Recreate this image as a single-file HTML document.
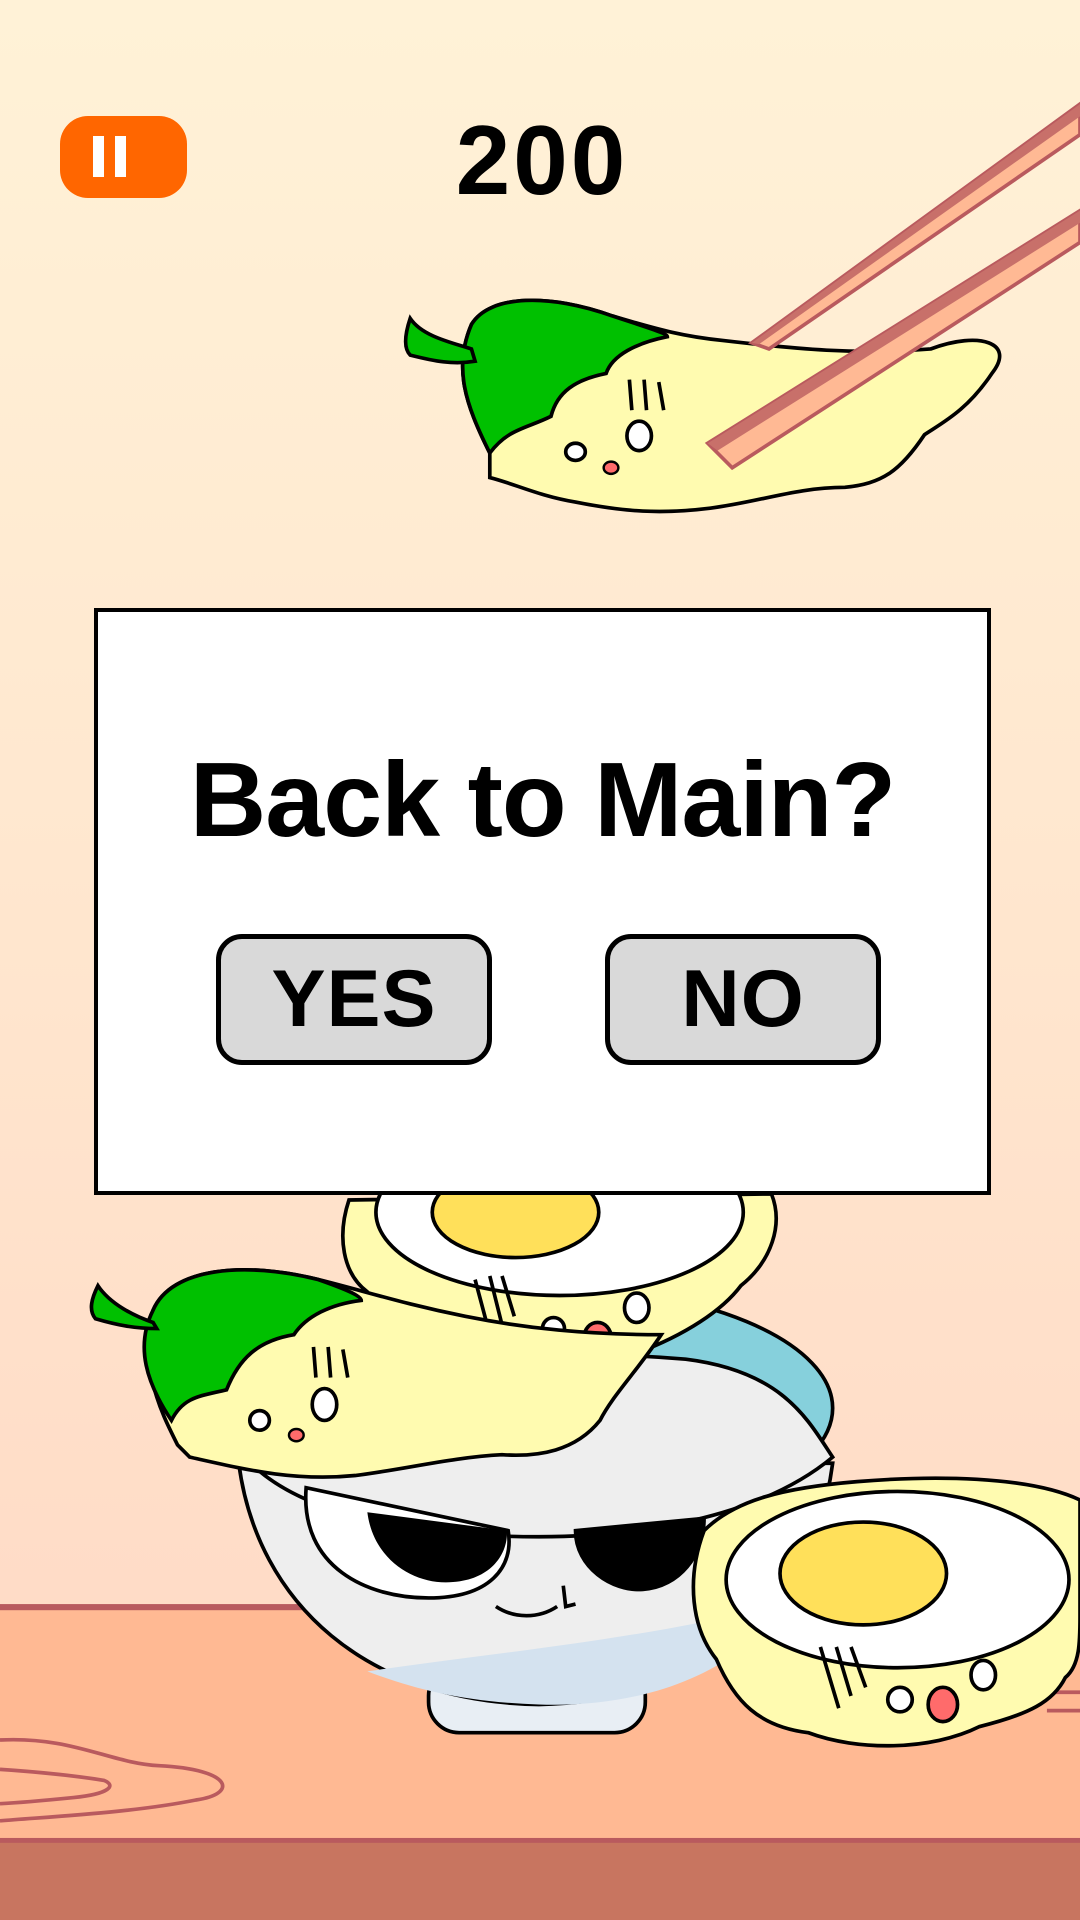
<!DOCTYPE html>
<html><head><meta charset="utf-8"><style>
html,body{margin:0;padding:0}
body{width:1080px;height:1920px;position:relative;overflow:hidden;background:linear-gradient(#fff2d7 0%,#ffe7cf 45%,#ffdcc7 83%);font-family:"Liberation Sans",sans-serif}
svg.bg{position:absolute;left:0;top:0;width:1080px;height:1920px}
.pause{position:absolute;left:60px;top:116px;width:127px;height:82px;background:#ff6600;border-radius:28px}
.pause i{position:absolute;top:20px;width:11px;height:41px;background:#fff}
.score{position:absolute;left:342px;width:400px;top:110px;text-align:center;font-weight:bold;font-size:98px;line-height:100px;letter-spacing:3px}
.dlg{position:absolute;left:94px;top:608px;width:889px;height:579px;background:#fff;border:4px solid #000}
.title{position:absolute;left:0;right:0;top:128px;text-align:center;font-weight:bold;font-size:106px;line-height:120px;letter-spacing:-1px}
.btn{position:absolute;top:322px;width:266px;height:121px;background:#d9d9d9;border:5px solid #000;border-radius:26px;text-align:center;font-weight:bold;font-size:81px;line-height:121px;letter-spacing:1px}
</style></head><body>
<svg class="bg" viewBox="0 0 882 1568" preserveAspectRatio="none">
<rect x="0" y="1312" width="882" height="256" fill="#ffb993"/>
<rect x="0" y="1310" width="882" height="5" fill="#b95a5e"/>
<rect x="0" y="1503" width="882" height="65" fill="#c87560"/>
<rect x="0" y="1501" width="882" height="4" fill="#b95a5e"/>
<path d="M0 1421 C60 1418 90 1440 130 1442 C190 1445 195 1465 160 1470 C110 1480 50 1483 0 1487 M0 1445 C30 1447 60 1450 85 1454 C95 1458 90 1465 60 1468 C40 1470 20 1472 0 1473" fill="none" stroke="#b95a5e" stroke-width="3"/>
<path d="M860 1382 L882 1382 M855 1397 L882 1397" stroke="#b95a5e" stroke-width="3"/>
<!-- top tempura -->
<path d="M400 370 C380 330 370 300 385 265 C400 240 450 240 500 258 C540 270 560 275 590 278 C650 285 700 290 760 285 C800 270 830 280 810 305 C790 335 770 345 755 355 C735 385 720 395 690 398 C650 398 620 410 580 415 C540 420 510 418 470 410 C440 405 420 395 400 390 Z" fill="#fffbb0" stroke="#000" stroke-width="3"/>
<path d="M400 370 C380 330 370 300 385 265 C400 240 450 240 500 258 C530 268 545 272 545 275 C520 280 500 290 495 305 C470 310 455 320 450 340 C430 350 415 350 400 370 Z" fill="#00c000" stroke="#000" stroke-width="3"/>
<path d="M385 285 C370 280 345 275 335 260 C330 275 330 285 335 290 C355 295 370 298 388 295 Z" fill="#00c000" stroke="#000" stroke-width="3"/>
<ellipse cx="470" cy="369" rx="8" ry="7" fill="#fff" stroke="#000" stroke-width="3"/>
<ellipse cx="522" cy="356" rx="10" ry="12" fill="#fff" stroke="#000" stroke-width="3"/>
<ellipse cx="499" cy="382" rx="6" ry="5" fill="#ff6b6b" stroke="#000" stroke-width="2"/>
<path d="M514 310 L516 335 M526 310 L528 335 M538 312 L542 335" stroke="#000" stroke-width="3"/>
<!-- chopsticks -->
<path d="M882 85 L882 110 L628 285 L614 280 Z" fill="#ffb994" stroke="#b95a5e" stroke-width="3"/>
<path d="M882 85 L882 95 L620 281 L614 280 Z" fill="#c8706a"/>
<path d="M882 172 L882 198 L598 382 L578 362 Z" fill="#ffb994" stroke="#b95a5e" stroke-width="3"/>
<path d="M882 172 L882 182 L586 368 L578 362 Z" fill="#c8706a"/>
<!-- bowl -->
<rect x="350" y="1360" width="177" height="55" rx="25" fill="#e8eef4" stroke="#000" stroke-width="3"/>
<path d="M195 1195 C210 1310 300 1390 440 1392 C580 1390 665 1310 680 1195 Z" fill="#eeeeee" stroke="#000" stroke-width="3"/>
<path d="M300 1365 C400 1350 520 1340 640 1310 C600 1370 520 1395 440 1392 C380 1390 340 1380 300 1365 Z" fill="#d4e2ef"/>
<ellipse cx="440" cy="1150" rx="240" ry="100" fill="#86d0dc" stroke="#000" stroke-width="3"/>
<path d="M200 1190 C220 1120 380 1095 560 1110 C640 1120 660 1160 680 1190 C620 1240 520 1255 440 1255 C330 1255 240 1235 200 1190 Z" fill="#eeeeee" stroke="#000" stroke-width="3"/>
<path d="M250 1215 C245 1280 300 1305 350 1305 C400 1305 420 1280 415 1250 Z" fill="#fff" stroke="#000" stroke-width="3"/>
<path d="M300 1235 C305 1275 340 1295 370 1292 C400 1290 415 1270 414 1250 Z" fill="#000"/>
<path d="M470 1250 C470 1280 500 1300 525 1298 C555 1296 575 1270 575 1240 Z" fill="#000" stroke="#000" stroke-width="3"/>
<path d="M405 1312 C420 1322 440 1322 455 1312 M460 1295 L462 1312 L470 1310" fill="none" stroke="#000" stroke-width="3"/>
<!-- stacked egg -->
<path d="M285 980 C275 1010 280 1040 300 1055 C315 1080 330 1095 360 1100 C400 1120 470 1115 520 1105 C560 1090 590 1070 605 1050 C630 1030 640 1000 630 975 Z" fill="#fffbb0" stroke="#000" stroke-width="3"/>
<ellipse cx="457" cy="990" rx="150" ry="68" fill="#fff" stroke="#000" stroke-width="3"/>
<ellipse cx="421" cy="990" rx="68" ry="37" fill="#ffe05a" stroke="#000" stroke-width="3"/>
<ellipse cx="452" cy="1085" rx="9" ry="9" fill="#fff" stroke="#000" stroke-width="3"/>
<ellipse cx="520" cy="1068" rx="10" ry="12" fill="#fff" stroke="#000" stroke-width="3"/>
<ellipse cx="488" cy="1092" rx="11" ry="12" fill="#ff6b6b" stroke="#000" stroke-width="3"/>
<path d="M388 1045 L400 1090 M400 1042 L410 1082 M410 1042 L420 1075" stroke="#000" stroke-width="3"/>
<!-- left tempura -->
<path d="M145 1180 C130 1150 115 1120 125 1070 C140 1035 200 1030 260 1045 C300 1055 330 1065 380 1075 C430 1085 480 1090 540 1090 C520 1120 500 1140 490 1160 C470 1185 440 1190 410 1188 C370 1190 330 1200 290 1205 C240 1210 200 1200 155 1190 Z" fill="#fffbb0" stroke="#000" stroke-width="3"/>
<path d="M140 1160 C120 1130 110 1100 125 1070 C140 1035 200 1030 260 1045 C280 1052 295 1058 295 1062 C270 1065 250 1075 240 1090 C210 1095 195 1110 185 1135 C165 1140 150 1140 140 1160 Z" fill="#00c000" stroke="#000" stroke-width="3"/>
<path d="M125 1080 C110 1075 90 1065 80 1050 C75 1060 72 1070 78 1077 C95 1082 110 1085 128 1085 Z" fill="#00c000" stroke="#000" stroke-width="3"/>
<ellipse cx="212" cy="1160" rx="8" ry="8" fill="#fff" stroke="#000" stroke-width="3"/>
<ellipse cx="265" cy="1147" rx="10" ry="13" fill="#fff" stroke="#000" stroke-width="3"/>
<ellipse cx="242" cy="1172" rx="6" ry="5" fill="#ff6b6b" stroke="#000" stroke-width="2"/>
<path d="M256 1100 L258 1125 M268 1100 L270 1125 M280 1102 L284 1125" stroke="#000" stroke-width="3"/>
<!-- right egg -->
<path d="M575 1250 C560 1290 565 1330 585 1355 C600 1390 620 1410 660 1415 C700 1430 760 1430 800 1410 C840 1400 860 1390 870 1370 C882 1360 882 1340 882 1320 L882 1225 C840 1205 760 1205 700 1210 C640 1215 600 1225 575 1250 Z" fill="#fffbb0" stroke="#000" stroke-width="3"/>
<ellipse cx="733" cy="1290" rx="140" ry="72" fill="#fff" stroke="#000" stroke-width="3"/>
<ellipse cx="705" cy="1285" rx="68" ry="42" fill="#ffe05a" stroke="#000" stroke-width="3"/>
<ellipse cx="735" cy="1388" rx="10" ry="10" fill="#fff" stroke="#000" stroke-width="3"/>
<ellipse cx="803" cy="1368" rx="10" ry="12" fill="#fff" stroke="#000" stroke-width="3"/>
<ellipse cx="770" cy="1392" rx="12" ry="14" fill="#ff6b6b" stroke="#000" stroke-width="3"/>
<path d="M670 1345 L685 1395 M683 1345 L695 1385 M695 1345 L707 1378" stroke="#000" stroke-width="3"/>
</svg>
<div class="pause"><i style="left:33px"></i><i style="left:55px"></i></div>
<div class="score">200</div>
<div class="dlg">
<div class="title">Back to Main?</div>
<div class="btn" style="left:118px">YES</div>
<div class="btn" style="left:507px">NO</div>
</div>
</body></html>
